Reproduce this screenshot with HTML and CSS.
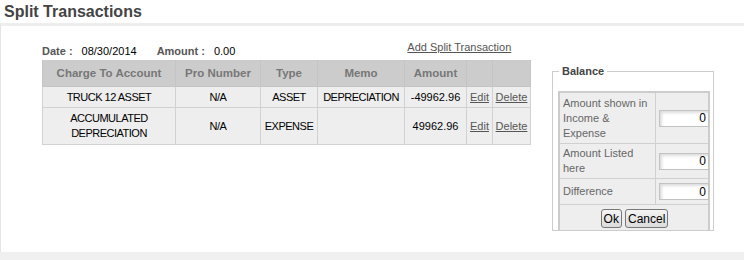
FILE: index.html
```html
<!DOCTYPE html>
<html lang="en">
<head>
    <meta charset="UTF-8">
    <title>Split Transactions</title>
    <link rel="stylesheet" href="styles.css">
</head>
<body>

    <!-- Naglowek -->
    <h1 class="page-title">Split Transactions</h1>

    <div class="panel">
        <div class="split-main">
            <div class="split-info">
                <span class="info-label">Date :</span>
                <span class="info-value date-value">08/30/2014</span>
                <span class="info-label">Amount :</span>
                <span class="info-value">0.00</span>
                <a href="#" class="add-link">Add Split Transaction</a>
            </div>

            <table class="split-table">
                <tr>
                    <th class="col-account">Charge To Account</th>
                    <th class="col-pro">Pro Number</th>
                    <th class="col-type">Type</th>
                    <th class="col-memo">Memo</th>
                    <th class="col-amount">Amount</th>
                    <th class="col-edit"></th>
                    <th class="col-delete"></th>
                </tr>
                <tr class="row-short">
                    <td class="caps">TRUCK 12 ASSET</td>
                    <td class="caps">N/A</td>
                    <td class="caps">ASSET</td>
                    <td class="caps">DEPRECIATION</td>
                    <td>-49962.96</td>
                    <td><a href="#">Edit</a></td>
                    <td><a href="#">Delete</a></td>
                </tr>
                <tr class="row-tall">
                    <td class="caps">ACCUMULATED<br>DEPRECIATION</td>
                    <td class="caps">N/A</td>
                    <td class="caps">EXPENSE</td>
                    <td></td>
                    <td>49962.96</td>
                    <td><a href="#">Edit</a></td>
                    <td><a href="#">Delete</a></td>
                </tr>
            </table>
        </div>

        <!-- Bilans -->
        <fieldset class="balance">
            <legend>Balance</legend>
            <table class="balance-table">
                <tr class="b-row1">
                    <td class="b-label">Amount shown in Income &amp; Expense</td>
                    <td class="b-input"><input type="text" value="0"></td>
                </tr>
                <tr class="b-row2">
                    <td class="b-label">Amount Listed here</td>
                    <td class="b-input"><input type="text" value="0"></td>
                </tr>
                <tr class="b-row3">
                    <td class="b-label">Difference</td>
                    <td class="b-input"><input type="text" value="0"></td>
                </tr>
                <tr class="b-row4">
                    <td colspan="2" class="b-buttons">
                        <button>Ok</button>
                        <button>Cancel</button>
                    </td>
                </tr>
            </table>
        </fieldset>
    </div>

    <div class="bottom-band"></div>

</body>
</html>
```

FILE: styles.css
```css
body {
    margin: 0;
    font-family: 'Liberation Sans', Arial, sans-serif;
    background-color: #fff;
    overflow: hidden;
}

.page-title {
    margin: 0;
    padding: 3px 4px 0;
    height: 20px;
    font-size: 16px;
    font-weight: bold;
    color: #444;
}

/* Panel glowny */
.panel {
    border-top: 3px solid #eeeeee;
    border-left: 1px solid #e4e4e4;
    height: 229px;
    box-sizing: border-box;
    display: flex;
    align-items: flex-start;
}

.split-main {
    margin-left: 41px;
    margin-top: 15px;
}

.split-info {
    display: flex;
    align-items: center;
    height: 19px;
    font-size: 11px;
}

.info-label {
    font-weight: bold;
    color: #555;
    margin-right: 9px;
}

.info-value {
    color: #000;
}

.date-value {
    margin-right: 20px;
}

.add-link {
    margin-left: 172px;
    margin-top: -8px;
    color: #555;
    font-size: 11px;
}

.split-table {
    border-collapse: collapse;
    table-layout: fixed;
    font-size: 11px;
    width: 488px;
}

.split-table th {
    background-color: #cccccc;
    color: #777;
    font-size: 11.5px;
    font-weight: bold;
    height: 26px;
    padding: 0;
    border: 1px solid #c4c4c4;
    border-top: 0;
}

.split-table td {
    background-color: #eeeeee;
    color: #000;
    text-align: center;
    border: 1px solid #d2d2d2;
    padding: 0;
    line-height: 15px;
    white-space: nowrap;
}

.split-table td.caps {
    letter-spacing: -0.5px;
}

.split-table a {
    color: #555;
}

.row-short td {
    height: 20px;
}

.row-tall td {
    height: 36px;
}

.col-account { width: 132px; }
.col-pro { width: 84px; }
.col-type { width: 56px; }
.col-memo { width: 86px; }
.col-amount { width: 61px; }
.col-edit { width: 25px; }
.col-delete { width: 37px; }

/* Bilans */
.balance {
    margin: 39px 0 0 21px;
    width: 162px;
    height: 166px;
    box-sizing: border-box;
    border: 1px solid #cccccc;
    padding: 14px 3px 0 5px;
    overflow: hidden;
}

.balance legend {
    font-size: 11px;
    font-weight: bold;
    color: #444;
    padding: 0 3px;
    margin-left: 1px;
}

.balance-table {
    border-collapse: collapse;
    table-layout: fixed;
    border: 2px solid #cccccc;
    width: 152px;
    font-size: 11px;
}

.balance-table td {
    background-color: #eeeeee;
    border: 1px solid #d0d0d0;
    color: #666;
    padding: 0 2px 0 3px;
    line-height: 15px;
}

.b-label {
    width: 90px;
}

.b-input {
    padding: 0 2px 0 3px !important;
}

.b-input input {
    width: 50px;
    height: 17px;
    box-sizing: border-box;
    border: 1px solid #c2c2c2;
    box-shadow: inset 2px 2px 3px #ddd;
    text-align: right;
    font-family: 'Liberation Sans', Arial, sans-serif;
    font-size: 12px;
    padding: 0 2px;
    color: #000;
}

.b-row1 td { height: 50px; }
.b-row2 td { height: 34px; }
.b-row3 td { height: 25px; }
.b-row4 td { height: 30px; }

.b-buttons {
    text-align: center;
    vertical-align: top;
    padding-top: 4px !important;
}

.b-buttons button {
    font-family: 'Liberation Sans Narrow', 'Liberation Sans', Arial, sans-serif;
    font-size: 12px;
    color: #000;
    background: linear-gradient(#f4f4f4, #dcdcdc);
    border: 1px solid #777;
    border-radius: 3px;
    padding: 0 2px;
    height: 19px;
}

.bottom-band {
    height: 9px;
    background-color: #f0f0f0;
}
```
